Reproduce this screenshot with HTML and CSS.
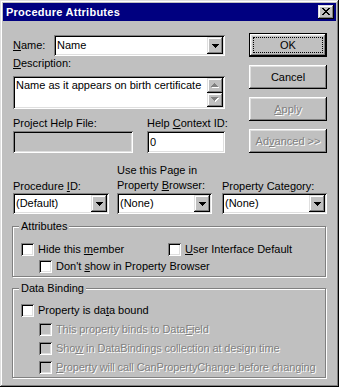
FILE: index.html
```html
<!DOCTYPE html>
<html>
    <head>
        <meta charset="utf-8">
        <title>Procedure Attributes</title>
        <link rel="stylesheet" href="styles.css">
    </head>
    <body>
        <div class="window">
            <div class="titlebar">
                <span class="title">Procedure Attributes</span>
                <span class="close">
                    <svg width="8" height="7" viewBox="0 0 8 7" shape-rendering="crispEdges"><path fill="#000" d="M0 0h2v1h-2z M6 0h2v1h-2z M1 1h2v1h-2z M5 1h2v1h-2z M2 2h4v1h-4z M3 3h2v1h-2z M2 4h4v1h-4z M1 5h2v1h-2z M5 5h2v1h-2z M0 6h2v1h-2z M6 6h2v1h-2z"/></svg>
                </span>
            </div>

            <div class="content">
                <div class="top">
                    <div class="fields">
                        <div class="name-row">
                            <span class="name-label"><u>N</u>ame:</span>
                            <div class="combo name-combo">
                                <span class="value">Name</span>
                                <span class="drop"><svg width="7" height="4" viewBox="0 0 7 4" shape-rendering="crispEdges"><path fill="#000" d="M0 0h7v1h-1v1h-1v1h-1v1h-1v-1h-1v-1h-1v-1h-1z"/></svg></span>
                            </div>
                        </div>

                        <div class="label desc-label"><u>D</u>escription:</div>
                        <div class="memo">
                            <div class="memo-text">Name as it appears on birth certificate</div>
                            <div class="scrollbar">
                                <span class="sb-btn"><svg width="8" height="5" viewBox="0 0 8 5" shape-rendering="crispEdges"><path fill="#fff" d="M4 1h1v1h1v1h1v1h1v1h-7v-1h1v-1h1v-1h1z"/><path fill="#808080" d="M3 0h1v1h1v1h1v1h1v1h-7v-1h1v-1h1v-1h1z"/></svg></span>
                                <span class="sb-btn"><svg width="8" height="5" viewBox="0 0 8 5" shape-rendering="crispEdges"><path fill="#fff" d="M1 1h7v1h-1v1h-1v1h-1v1h-1v-1h-1v-1h-1v-1h-1z"/><path fill="#808080" d="M0 0h7v1h-1v1h-1v1h-1v1h-1v-1h-1v-1h-1v-1h-1z"/></svg></span>
                            </div>
                        </div>

                        <div class="help-row">
                            <div class="help-file">
                                <div class="label">Project Help File:</div>
                                <div class="textbox disabled"></div>
                            </div>
                            <div class="help-id">
                                <div class="label">Help <u>C</u>ontext ID:</div>
                                <div class="textbox">0</div>
                            </div>
                        </div>
                    </div>

                    <div class="buttons">
                        <button class="btn default"><span class="focus">OK</span></button>
                        <button class="btn">Cancel</button>
                        <button class="btn disabled"><span><u>A</u>pply</span></button>
                        <button class="btn disabled"><span>Ad<u>v</u>anced &gt;&gt;</span></button>
                    </div>
                </div>

                <div class="combo-row">
                    <div class="col col-proc">
                        <div class="label">Procedure <u>I</u>D:</div>
                        <div class="combo">
                            <span class="value">(Default)</span>
                            <span class="drop"><svg width="7" height="4" viewBox="0 0 7 4" shape-rendering="crispEdges"><path fill="#000" d="M0 0h7v1h-1v1h-1v1h-1v1h-1v-1h-1v-1h-1v-1h-1z"/></svg></span>
                        </div>
                    </div>
                    <div class="col col-page">
                        <div class="label two-line">Use this Page in<br>Property <u>B</u>rowser:</div>
                        <div class="combo">
                            <span class="value">(None)</span>
                            <span class="drop"><svg width="7" height="4" viewBox="0 0 7 4" shape-rendering="crispEdges"><path fill="#000" d="M0 0h7v1h-1v1h-1v1h-1v1h-1v-1h-1v-1h-1v-1h-1z"/></svg></span>
                        </div>
                    </div>
                    <div class="col col-cat">
                        <div class="label">Property Cate<u>g</u>ory:</div>
                        <div class="combo">
                            <span class="value">(None)</span>
                            <span class="drop"><svg width="7" height="4" viewBox="0 0 7 4" shape-rendering="crispEdges"><path fill="#000" d="M0 0h7v1h-1v1h-1v1h-1v1h-1v-1h-1v-1h-1v-1h-1z"/></svg></span>
                        </div>
                    </div>
                </div>

                <fieldset class="group group-attr">
                    <legend>Attributes</legend>
                    <div class="group-body">
                        <div class="check-row">
                            <label class="check check-hide"><span class="box"></span><span>Hide this <u>m</u>ember</span></label>
                            <label class="check"><span class="box"></span><span><u>U</u>ser Interface Default</span></label>
                        </div>
                        <div class="check-row indent">
                            <label class="check"><span class="box"></span><span>Don't <u>s</u>how in Property Browser</span></label>
                        </div>
                    </div>
                </fieldset>

                <fieldset class="group group-data">
                    <legend>Data Binding</legend>
                    <div class="group-body">
                        <div class="check-row">
                            <label class="check"><span class="box"></span><span>Property is da<u>t</u>a bound</span></label>
                        </div>
                        <div class="check-row indent">
                            <label class="check disabled"><span class="box"></span><span>This property binds to Data<u>F</u>ield</span></label>
                        </div>
                        <div class="check-row indent">
                            <label class="check disabled"><span class="box"></span><span>Sho<u>w</u> in DataBindings collection at design time</span></label>
                        </div>
                        <div class="check-row indent">
                            <label class="check disabled"><span class="box"></span><span><u>P</u>roperty will call CanPropertyChange before changing</span></label>
                        </div>
                    </div>
                </fieldset>
            </div>
        </div>
    </body>
</html>
```

FILE: styles.css
```css
body {
    margin: 0;
    background: #c0c0c0;
    font-family: 'Liberation Sans', Arial, sans-serif;
    font-size: 11px;
    line-height: 13px;
    color: #000;
}

* {
    box-sizing: border-box;
}

u {
    text-underline-offset: 1px;
}

.window {
    width: 339px;
    height: 387px;
    padding: 3px;
    overflow: hidden;
    background: #c0c0c0;
    /* classic raised window frame */
    box-shadow: inset -1px -1px #000, inset 1px 1px #dfdfdf, inset -2px -2px #808080, inset 2px 2px #fff;
}

.titlebar {
    display: flex;
    align-items: center;
    justify-content: space-between;
    height: 18px;
    padding: 0 2px 0 3px;
    background: #000080;
}

.title {
    color: #fff;
    font-weight: bold;
    letter-spacing: 0.25px;
}

.close,
.drop,
.sb-btn {
    display: flex;
    align-items: center;
    justify-content: center;
    background: #c0c0c0;
    box-shadow: inset -1px -1px #000, inset 1px 1px #dfdfdf, inset -2px -2px #808080, inset 2px 2px #fff;
}

.close {
    width: 16px;
    height: 14px;
    padding: 0 1px 1px 0;
}

.content {
    padding: 12px 9px 0 10px;
}

.top {
    display: flex;
    gap: 24px;
}

.fields {
    width: 212px;
    padding-top: 2px;
}

.label,
.name-label,
.check span {
    white-space: nowrap;
}

/* sunken edit fields */
.combo,
.memo,
.textbox,
.check .box {
    background: #fff;
    box-shadow: inset 1px 1px #808080, inset -1px -1px #fff, inset 2px 2px #000, inset -2px -2px #dfdfdf;
}

.name-row {
    display: flex;
    align-items: center;
    height: 21px;
}

.name-label {
    width: 41px;
}

.combo {
    display: flex;
    height: 21px;
    padding: 2px;
}

.combo .value {
    flex: 1;
    padding-left: 1px;
    line-height: 17px;
}

.drop {
    width: 16px;
    height: 17px;
}

.name-combo {
    width: 171px;
}

.desc-label {
    margin-top: 1px;
}

.memo {
    display: flex;
    height: 33px;
    margin-top: 6px;
    padding: 2px;
}

.memo-text {
    flex: 1;
    padding: 1px 0 0 1px;
}

.scrollbar {
    display: flex;
    flex-direction: column;
    width: 16px;
}

.sb-btn {
    flex: 1;
}

.help-row {
    display: flex;
    gap: 14px;
    margin-top: 8px;
}

.help-file {
    width: 120px;
}

.help-id {
    width: 78px;
}

.textbox {
    height: 22px;
    margin-top: 1px;
    padding: 2px 3px;
    line-height: 18px;
}

.textbox.disabled {
    background: #c0c0c0;
}

.buttons {
    display: flex;
    flex-direction: column;
    gap: 8px;
}

.btn {
    display: flex;
    align-items: center;
    justify-content: center;
    width: 78px;
    height: 24px;
    padding: 0;
    border: none;
    background: #c0c0c0;
    font: inherit;
    color: #000;
    white-space: nowrap;
    box-shadow: inset -1px -1px #000, inset 1px 1px #fff, inset -2px -2px #808080, inset 2px 2px #dfdfdf;
}

.btn.default {
    padding: 4px;
    box-shadow: inset 0 0 0 1px #000, inset -2px -2px #000, inset 2px 2px #fff, inset -3px -3px #808080, inset 3px 3px #dfdfdf;
}

.btn .focus {
    display: flex;
    align-items: center;
    justify-content: center;
    width: 100%;
    height: 100%;
    border: 1px dotted #000;
}

.btn.disabled,
.check.disabled {
    color: #808080;
    text-shadow: 1px 1px 0 #fff;
}

.check.disabled span {
    letter-spacing: -0.1px;
}

.combo-row {
    display: flex;
    align-items: flex-end;
    gap: 8px;
    margin-top: 10px;
}

.col-proc {
    width: 96px;
}

.col-page {
    width: 95px;
}

.col-cat {
    width: 105px;
    margin-left: 2px;
}

.two-line {
    line-height: 15px;
}

.group {
    width: 314px;
    margin: 6px 0 0 -1px;
    padding: 0;
    border: 1px solid #808080;
    /* etched frame: grey line with a white line beside it */
    box-shadow: inset 1px 1px #fff, 1px 1px #fff;
    min-inline-size: 0;
}

.group legend {
    margin-left: 6px;
    padding: 0 2px;
    background: #c0c0c0;
    line-height: 13px;
}

.group-attr .group-body {
    padding: 8px 0 1px 8px;
}

.group-data {
    margin-top: 5px;
}

.group-data .group-body {
    padding: 6px 0 0 8px;
}

.check-row {
    display: flex;
    height: 17px;
    align-items: center;
}

.group-data .check-row {
    height: 19px;
}

.check-row.indent {
    padding-left: 18px;
}

.check {
    display: flex;
    align-items: center;
}

.check-hide {
    width: 147px;
}

.check .box {
    width: 13px;
    height: 13px;
    margin-right: 4px;
}

.check.disabled .box {
    background: #c0c0c0;
}
```
